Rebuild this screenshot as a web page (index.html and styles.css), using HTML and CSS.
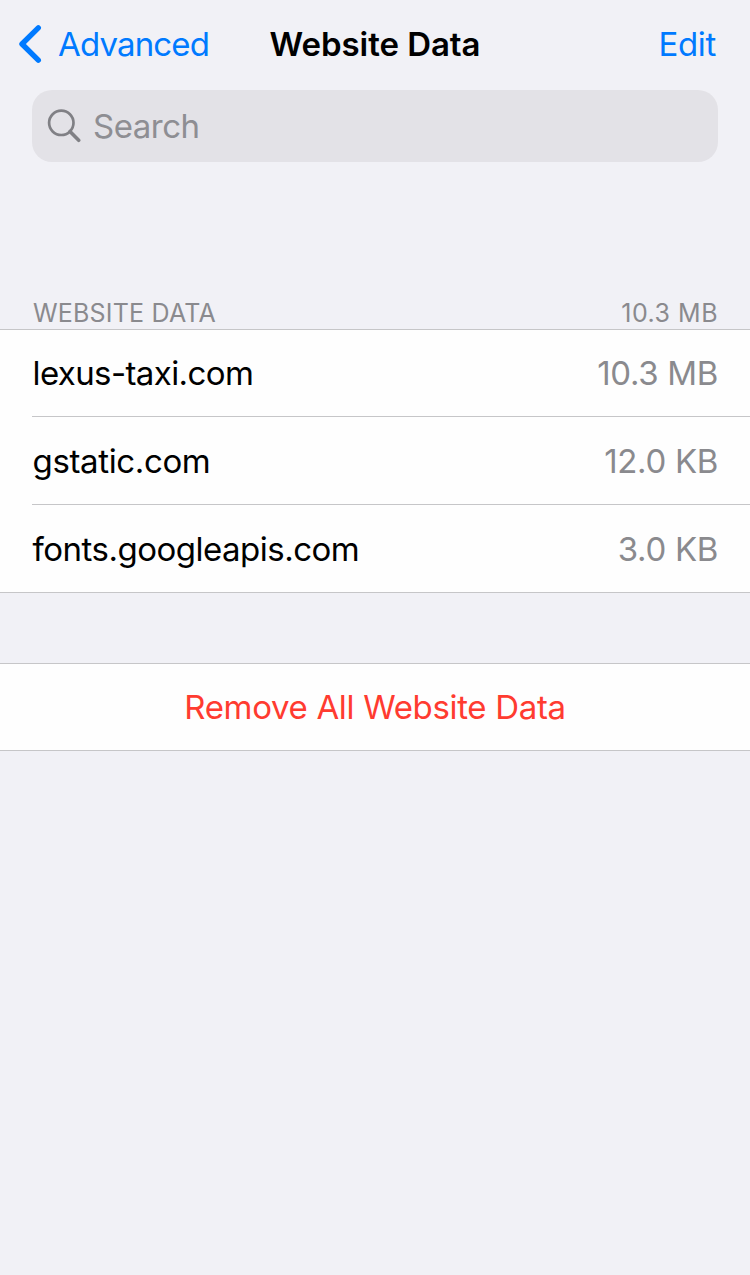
FILE: index.html
```html
<!DOCTYPE html>
<html lang="en">
<head>
    <meta charset="UTF-8">
    <meta name="viewport" content="width=device-width, initial-scale=1.0">
    <title>Website Data</title>
    <link rel="stylesheet" href="styles.css">
</head>
<body>
    <header class="navbar">
        <a class="back" href="#">
            <svg class="chevron" width="24" height="40" viewBox="0 0 24 40">
                <path d="M20.3 3.8 L4 20 L20.3 36.2" fill="none" stroke="currentColor" stroke-width="5.4" stroke-linecap="round" stroke-linejoin="round"/>
            </svg>
            <span class="back-label">Advanced</span>
        </a>
        <h1 class="title">Website Data</h1>
        <a class="edit" href="#">Edit</a>
    </header>

    <div class="search">
        <svg class="search-icon" width="34" height="34" viewBox="0 0 34 34">
            <circle cx="14.3" cy="13.8" r="12.2" fill="none" stroke="currentColor" stroke-width="2.7"/>
            <path d="M23 22.5 L31.7 31.3" stroke="currentColor" stroke-width="3.6" stroke-linecap="round"/>
        </svg>
        <span class="search-label">Search</span>
    </div>

    <div class="section-header">
        <span class="section-name">WEBSITE DATA</span>
        <span class="section-total">10.3 MB</span>
    </div>

    <ul class="list">
        <li class="row">
            <span class="domain">lexus-taxi.com</span>
            <span class="size">10.3 MB</span>
        </li>
        <li class="row">
            <span class="domain short">gstatic.com</span>
            <span class="size">12.0 KB</span>
        </li>
        <li class="row">
            <span class="domain long">fonts.googleapis.com</span>
            <span class="size">3.0 KB</span>
        </li>
    </ul>

    <button class="remove">Remove All Website Data</button>
</body>
</html>
```
FILE: styles.css
```css
* {
    box-sizing: border-box;
}

body {
    margin: 0;
    min-height: 100vh;
    background: #f1f1f6;
    color: #000;
    font-family: Inter, "Liberation Sans", sans-serif;
    font-size: 33px;
    line-height: 40px;
    letter-spacing: -0.33px;
}

a {
    color: #007aff;
    text-decoration: none;
}

/* Navigation bar */
.navbar {
    display: grid;
    grid-template-columns: 1fr auto 1fr;
    align-items: center;
    height: 90px;
    padding: 0 18px 2px;
}

.back {
    display: flex;
    align-items: center;
    gap: 16px;
    letter-spacing: -0.85px;
}

.title {
    margin: 0;
    font-size: 33px;
    font-weight: 600;
    letter-spacing: -0.05px;
}

.edit {
    padding-right: 16px;
    text-align: right;
}

/* Search field */
.search {
    display: flex;
    align-items: center;
    gap: 12px;
    height: 72px;
    margin: 0 32px;
    padding: 0 15px;
    border-radius: 20px;
    background: #e3e2e7;
    color: #8e8e93;
    letter-spacing: -0.5px;
}

.search-icon {
    color: #808085;
}

/* Grouped list */
.section-header {
    display: flex;
    justify-content: space-between;
    margin-top: 137px;
    padding: 0 32px 1px 33px;
    color: #8a8a8e;
    font-size: 25px;
    line-height: 29px;
    letter-spacing: 0.2px;
}

.section-total {
    letter-spacing: 0.5px;
}

.list {
    margin: 0;
    padding: 0 0 0 32px;
    list-style: none;
    background: #fefefe;
    border-top: 1px solid #c6c6c8;
    border-bottom: 1px solid #c6c6c8;
}

.row {
    display: flex;
    justify-content: space-between;
    align-items: center;
    height: 88px;
    padding: 0 32px 0 0.5px;
}

.row:first-child {
    height: 86px;
}

.row + .row {
    border-top: 1px solid #c6c6c8;
}

.domain {
    letter-spacing: -0.6px;
}

.domain.short {
    letter-spacing: -0.36px;
}

.domain.long {
    letter-spacing: -0.5px;
}

.size {
    color: #8a8a8e;
}

.remove {
    display: block;
    width: 100%;
    height: 88px;
    margin-top: 70px;
    padding: 0;
    border: solid #c6c6c8;
    border-width: 1px 0;
    background: #fefefe;
    color: #ff3b30;
    font: inherit;
    letter-spacing: inherit;
}
```
